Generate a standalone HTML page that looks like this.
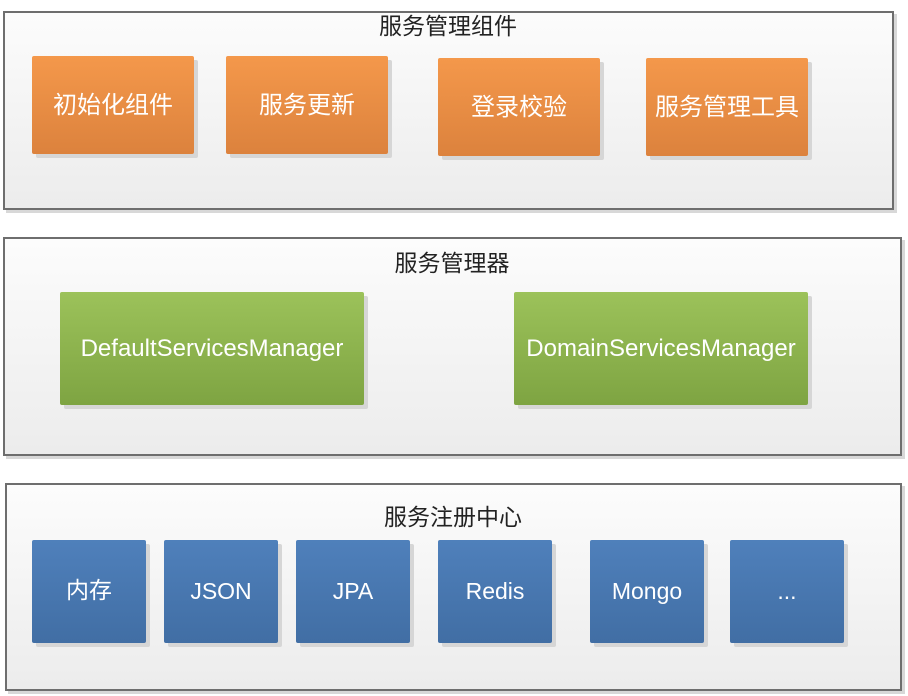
<!DOCTYPE html>
<html><head><meta charset="utf-8"><style>
body{margin:0;width:908px;height:696px;background:#fff;position:relative;overflow:hidden;font-family:"Liberation Sans","Noto Sans CJK SC",sans-serif}
.c{position:absolute;border:2px solid #6e6e6e;background:linear-gradient(#fcfcfc,#ececec);box-shadow:3px 3px 0 #d8d8d8;box-sizing:border-box}
.t{position:absolute;font-size:23px;color:#222;transform:translateX(-50%);white-space:nowrap;line-height:1}
.b{position:absolute;color:#fff;display:flex;align-items:center;justify-content:center;border-radius:2px;box-shadow:4px 4px 0 #d6d6d6;font-size:24px;box-sizing:border-box}
.o{background:linear-gradient(#f4984b,#dc823d);padding-bottom:5px}
.g{background:linear-gradient(#9cc25a,#7ea442);font-size:24px}
.u{background:linear-gradient(#4f80bb,#416ea4);font-size:23px}
</style></head><body>
<div class="c" style="left:3px;top:11px;width:891px;height:199px"></div>
<div class="t" style="left:448px;top:15px">服务管理组件</div>
<div class="b o" style="left:32px;top:56px;width:162px;height:98px">初始化组件</div>
<div class="b o" style="left:226px;top:56px;width:162px;height:98px">服务更新</div>
<div class="b o" style="left:438px;top:58px;width:162px;height:98px">登录校验</div>
<div class="b o" style="left:646px;top:58px;width:162px;height:98px">服务管理工具</div>

<div class="c" style="left:3px;top:237px;width:899px;height:219px"></div>
<div class="t" style="left:452px;top:252px">服务管理器</div>
<div class="b g" style="left:60px;top:292px;width:304px;height:113px">DefaultServicesManager</div>
<div class="b g" style="left:514px;top:292px;width:294px;height:113px">DomainServicesManager</div>

<div class="c" style="left:5px;top:483px;width:897px;height:208px"></div>
<div class="t" style="left:453px;top:506px">服务注册中心</div>
<div class="b u" style="left:32px;top:540px;width:114px;height:103px;padding-bottom:7px">内存</div>
<div class="b u" style="left:164px;top:540px;width:114px;height:103px">JSON</div>
<div class="b u" style="left:296px;top:540px;width:114px;height:103px">JPA</div>
<div class="b u" style="left:438px;top:540px;width:114px;height:103px">Redis</div>
<div class="b u" style="left:590px;top:540px;width:114px;height:103px">Mongo</div>
<div class="b u" style="left:730px;top:540px;width:114px;height:103px">...</div>
</body></html>
